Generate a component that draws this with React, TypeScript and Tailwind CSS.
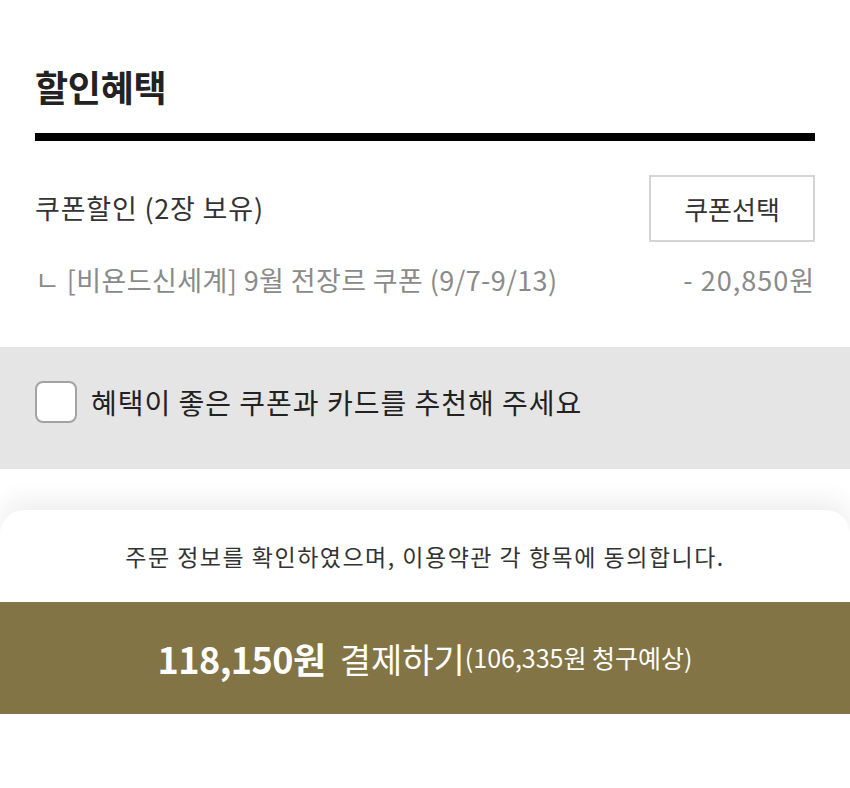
export default function App() {
  const font = { fontFamily: '"Noto Sans CJK KR", "Noto Sans", sans-serif' }
  return (
    <div className="w-[850px] h-[788px] bg-white flex flex-col overflow-hidden" style={font}>
      <div className="px-[35px]">
        <h1 className="pt-[62px] text-[36px] font-bold leading-[48px] text-[#222] tracking-[-0.3px]">할인혜택</h1>
        <div className="mt-[23px] h-[8px] bg-black" />
        <div className="mt-[34px] flex items-center justify-between">
          <span className="text-[27px] text-[#333] tracking-[0.8px]">쿠폰할인 (2장 보유)</span>
          <button className="w-[166px] h-[67px] border-2 border-[#d4d4d4] text-[26px] text-[#333] bg-white">
            쿠폰선택
          </button>
        </div>
        <div className="mt-[17px] flex items-center justify-between text-[27px] text-[#8a8a8a] leading-[42px]">
          <span className="tracking-[0.4px]">ㄴ [비욘드신세계] 9월 전장르 쿠폰 (9/7-9/13)</span>
          <span className="tracking-[1px]">- 20,850원</span>
        </div>
      </div>
      <div className="mt-[46px] h-[122px] bg-[#e5e5e5] px-[35px] pb-[12px] flex items-center gap-[14px]">
        <span className="w-[42px] h-[42px] rounded-[8px] border-2 border-[#a3a3a3] bg-white" />
        <span className="text-[28px] text-[#222] tracking-[1px]">혜택이 좋은 쿠폰과 카드를 추천해 주세요</span>
      </div>
      <div className="h-[41px] bg-white" />
      <div className="flex-1 rounded-t-[24px] bg-white shadow-[0_-10px_24px_rgba(0,0,0,0.07)] flex flex-col">
        <p className="h-[92px] flex items-center justify-center text-[23px] text-[#333] tracking-[1.5px]">
          주문 정보를 확인하였으며, 이용약관 각 항목에 동의합니다.
        </p>
        <button className="h-[112px] w-full bg-[#827445] flex items-center justify-center text-white">
          <span className="text-[36px] font-bold tracking-[-0.5px]">118,150원</span>
          <span className="ml-[14px] text-[34px]">결제하기</span>
          <span className="text-[25px]">(106,335원 청구예상)</span>
        </button>
        <div className="flex-1 bg-white" />
      </div>
    </div>
  )
}
